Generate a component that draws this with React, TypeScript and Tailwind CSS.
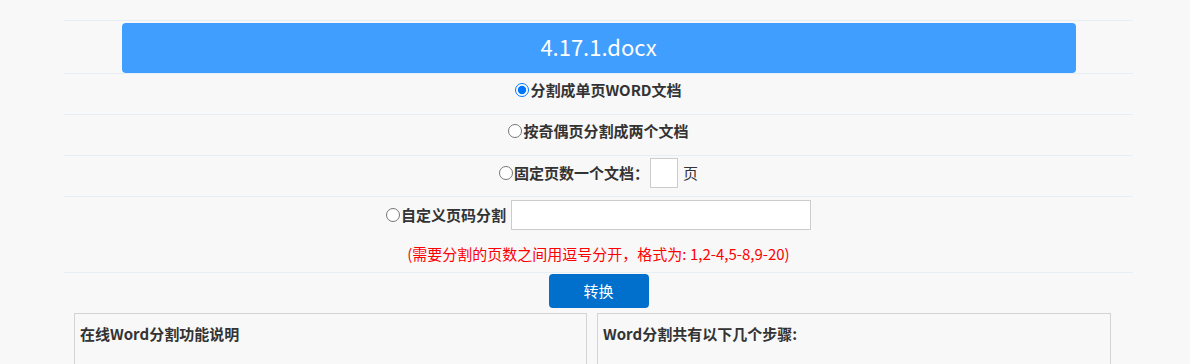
import { useState } from 'react'

type SplitMode = 'single' | 'oddEven' | 'fixed' | 'custom'

const FONT = "font-['Microsoft_YaHei','Noto_Sans_CJK_SC',sans-serif]"

function Radio({ checked, onChange }: { checked: boolean; onChange: () => void }) {
  return (
    <input
      type="radio"
      name="split-mode"
      checked={checked}
      onChange={onChange}
      className="m-0 mr-[1px] h-[14px] w-[14px] accent-[#0075ff]"
    />
  )
}

export default function App() {
  const [mode, setMode] = useState<SplitMode>('single')
  const [pages, setPages] = useState('')
  const [custom, setCustom] = useState('')

  return (
    <div className={`min-h-screen bg-[#f8f8f8] pt-5 ${FONT} text-[#333]`}>
      <div className="ml-[64px] w-[1069px]">
        {/* file name */}
        <div className="border-t border-[#e6eef6] pt-[2px]">
          <div className="mx-auto flex h-[50px] w-[954px] items-center justify-center rounded-[4px] bg-[#409eff] pb-[3px] text-[22px] text-white">
            4.17.1.docx
          </div>
        </div>

        <div className="flex h-[41px] justify-center border-t border-[#e6eef6] pt-[1px]">
          <label className="flex h-[30px] items-center text-[15px] font-bold">
            <Radio checked={mode === 'single'} onChange={() => setMode('single')} />
            分割成单页WORD文档
          </label>
        </div>

        <div className="flex h-[41px] justify-center border-t border-[#e6eef6] pt-[1px]">
          <label className="flex h-[30px] items-center text-[15px] font-bold">
            <Radio checked={mode === 'oddEven'} onChange={() => setMode('oddEven')} />
            按奇偶页分割成两个文档
          </label>
        </div>

        <div className="flex h-[41px] justify-center border-t border-[#e6eef6] pt-[2px]">
          <div className="flex h-[30px] items-center text-[15px]">
            <label className="flex items-center font-bold">
              <Radio checked={mode === 'fixed'} onChange={() => setMode('fixed')} />
              固定页数一个文档：
            </label>
            <input
              value={pages}
              onChange={(e) => setPages(e.target.value)}
              className="ml-[1px] h-[30px] w-[28px] border border-[#ccc] bg-white px-1 outline-none"
            />
            <span className="ml-[5px]">页</span>
          </div>
        </div>

        <div className="flex flex-col items-center border-t border-[#e6eef6] pt-[3px] pb-[8px]">
          <div className="flex h-[30px] items-center text-[15px]">
            <label className="flex items-center font-bold">
              <Radio checked={mode === 'custom'} onChange={() => setMode('custom')} />
              自定义页码分割
            </label>
            <input
              value={custom}
              onChange={(e) => setCustom(e.target.value)}
              className="ml-[5px] h-[30px] w-[300px] border border-[#ccc] bg-white px-2 outline-none"
            />
          </div>
          <p className="mt-[14px] text-[15px] leading-[20px] text-[#ff0000]">
            (需要分割的页数之间用逗号分开，格式为: 1,2-4,5-8,9-20)
          </p>
        </div>

        <div className="flex justify-center border-t border-[#e6eef6] pt-[1px]">
          <button className="h-[34px] w-[100px] rounded-[4px] bg-[#0070cc] text-[15px] text-white">
            转换
          </button>
        </div>

        <div className="mt-[5px] flex gap-[10px] pl-[10px]">
          <div className="h-[80px] w-[513px] border border-[#d3d3d3] pt-[9px] pl-[5px]">
            <h3 className="text-[15px] leading-[22px] font-bold">在线Word分割功能说明</h3>
          </div>
          <div className="h-[80px] w-[514px] border border-[#d3d3d3] pt-[9px] pl-[5px]">
            <h3 className="text-[15px] leading-[22px] font-bold">Word分割共有以下几个步骤:</h3>
          </div>
        </div>
      </div>
    </div>
  )
}
